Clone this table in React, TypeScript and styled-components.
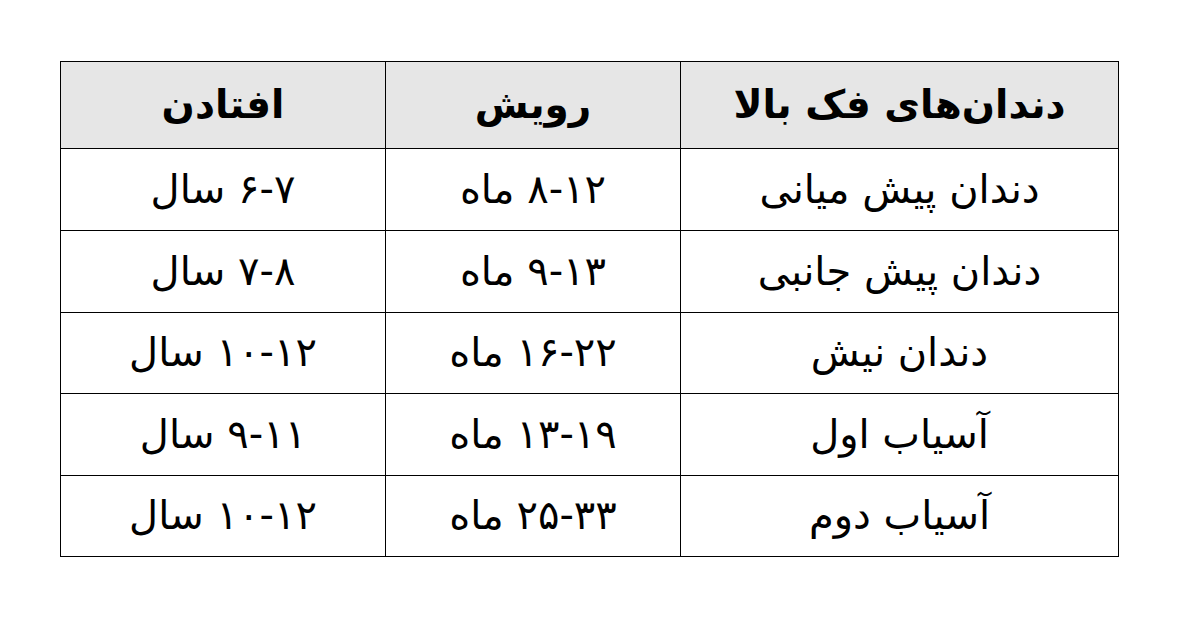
import React from 'react';
import styled, { createGlobalStyle } from 'styled-components';

const GlobalStyle = createGlobalStyle`
  html, body {
    margin: 0;
    padding: 0;
    background: #ffffff;
  }
`;

const Page = styled.div`
  padding: 61px 0 0 60px;
`;

const Grid = styled.div`
  direction: rtl;
  display: grid;
  width: 1059px;
  box-sizing: border-box;
  grid-template-columns: 438px 295px 325px;
  grid-template-rows: 87px 82px 82px 81px 82px 81px;
  border-top: 1px solid #000;
  border-right: 1px solid #000;
  font-family: 'DejaVu Sans', sans-serif;
  color: #000;
`;

const Cell = styled.div<{ $head?: boolean }>`
  display: flex;
  align-items: center;
  justify-content: center;
  border-left: 1px solid #000;
  border-bottom: 1px solid #000;
  background: ${(p) => (p.$head ? '#e6e6e6' : '#ffffff')};
  font-size: ${(p) => (p.$head ? '39px' : '40px')};
  font-weight: ${(p) => (p.$head ? 700 : 400)};
  padding-bottom: 2px;
  white-space: nowrap;
`;

const headers = ['دندان‌های فک بالا', 'رویش', 'افتادن'];

const rows = [
  ['دندان پیش میانی', '۸-۱۲ ماه', '۶-۷ سال'],
  ['دندان پیش جانبی', '۹-۱۳ ماه', '۷-۸ سال'],
  ['دندان نیش', '۱۶-۲۲ ماه', '۱۰-۱۲ سال'],
  ['آسیاب اول', '۱۳-۱۹ ماه', '۹-۱۱ سال'],
  ['آسیاب دوم', '۲۵-۳۳ ماه', '۱۰-۱۲ سال'],
];

const App: React.FC = () => {
  return (
    <>
      <GlobalStyle />
      <Page>
        <Grid>
          {headers.map((h) => (
            <Cell key={h} $head>
              {h}
            </Cell>
          ))}
          {rows.map((row, i) =>
            row.map((text, j) => <Cell key={`${i}-${j}`}>{text}</Cell>)
          )}
        </Grid>
      </Page>
    </>
  );
};

export default App;
